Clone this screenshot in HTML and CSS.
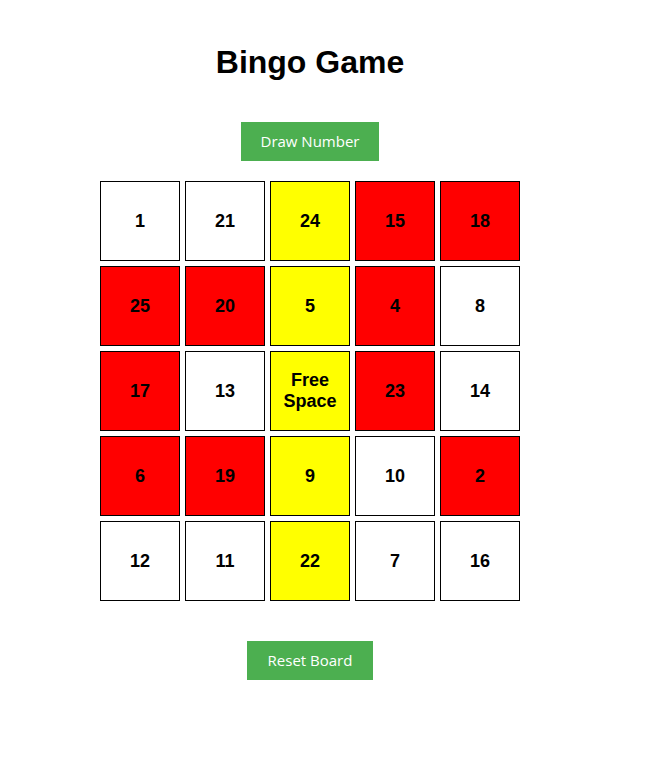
FILE: index.html
```html
<!DOCTYPE html>
<html>
<head>
<meta charset="utf-8">
<link rel="stylesheet" href="styles.css">
</head>
<body>
<div class="app">
  <h1 class="title">Bingo Game</h1>
  <button class="btn draw">Draw Number</button>
  <div class="board">
    <div class="cell">1</div>
    <div class="cell">21</div>
    <div class="cell yellow">24</div>
    <div class="cell red">15</div>
    <div class="cell red">18</div>
    <div class="cell red">25</div>
    <div class="cell red">20</div>
    <div class="cell yellow">5</div>
    <div class="cell red">4</div>
    <div class="cell">8</div>
    <div class="cell red">17</div>
    <div class="cell">13</div>
    <div class="cell yellow">Free<br>Space</div>
    <div class="cell red">23</div>
    <div class="cell">14</div>
    <div class="cell red">6</div>
    <div class="cell red">19</div>
    <div class="cell yellow">9</div>
    <div class="cell">10</div>
    <div class="cell red">2</div>
    <div class="cell">12</div>
    <div class="cell">11</div>
    <div class="cell yellow">22</div>
    <div class="cell">7</div>
    <div class="cell">16</div>
  </div>
  <button class="btn reset">Reset Board</button>
</div>
</body>
</html>
```

FILE: styles.css
```css
html, body {
  margin: 0;
  padding: 0;
  background: #ffffff;
}
body {
  font-family: "Liberation Sans", Arial, sans-serif;
}
.app {
  width: 620px;
  display: flex;
  flex-direction: column;
  align-items: center;
  padding-top: 44px;
}
.title {
  margin: 0;
  font-size: 32px;
  font-weight: bold;
  line-height: 37px;
}
.btn {
  font-family: "Open Sans", sans-serif;
  font-size: 15px;
  line-height: 19px;
  padding: 10px 20px;
  border: none;
  background: #4caf50;
  color: #ffffff;
  cursor: pointer;
}
.draw {
  margin-top: 41px;
}
.board {
  margin-top: 20px;
  display: grid;
  grid-template-columns: repeat(5, 80px);
  grid-auto-rows: 80px;
  gap: 5px;
}
.cell {
  box-sizing: border-box;
  border: 1px solid #000000;
  background: #ffffff;
  display: flex;
  align-items: center;
  justify-content: center;
  text-align: center;
  font-size: 18px;
  font-weight: bold;
  line-height: 21px;
}
.red { background: #ff0000; }
.yellow { background: #ffff00; }
.reset {
  margin-top: 40px;
  padding-left: 21px;
  padding-right: 21px;
}
```
